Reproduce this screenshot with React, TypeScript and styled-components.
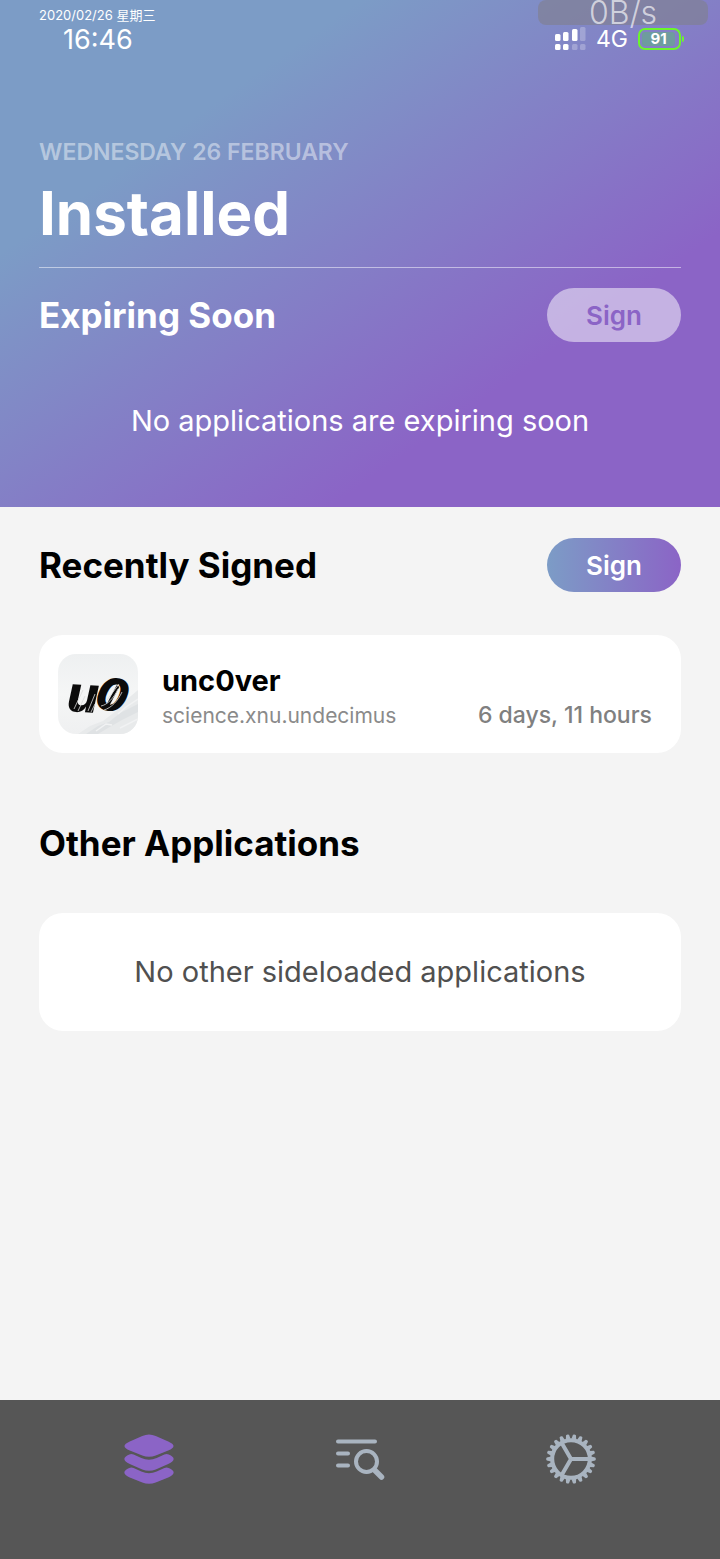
import React from 'react';
import styled, { createGlobalStyle } from 'styled-components';

const GlobalStyle = createGlobalStyle`
  *, *::before, *::after { box-sizing: border-box; }
  body { margin: 0; background: #f4f4f4; color: #000; font-family: Inter, "Noto Sans CJK SC", sans-serif; }
  h1, h2, h3, p { margin: 0; }
`;

const Page = styled.div`
  display: flex;
  flex-direction: column;
  min-height: 100vh;
`;

const Hero = styled.header`
  position: relative;
  padding: 6px 39px 66px;
  color: #fff;
  background: linear-gradient(to bottom right, #7c9cc6 25%, #8b64c6 73%);
`;

const StatusBar = styled.div`
  display: flex;
  justify-content: space-between;
  align-items: flex-end;
`;

const Clock = styled.div`
  display: flex;
  flex-direction: column;
`;

const DateLine = styled.span`
  font-size: 13px;
  line-height: 18px;
`;

const Time = styled.time`
  padding-left: 24px;
  font-size: 27px;
  line-height: 32px;
`;

const Indicators = styled.div`
  display: flex;
  align-items: center;
  gap: 10px;
  height: 34px;
`;

const Network = styled.span`
  font-size: 23px;
  line-height: 32px;
`;

const Battery = styled.div`
  position: relative;
  width: 43px;
  height: 22px;
  padding: 2px;
  border: 2px solid #6cf52c;
  border-radius: 7px;
  &::after {
    content: '';
    position: absolute;
    right: -5px;
    top: 6px;
    width: 2px;
    height: 6px;
    border-radius: 0 2px 2px 0;
    background: #6cf52c;
  }
`;

const Charge = styled.div`
  width: 33px;
  border-radius: 3px;
  background: #6e9c9e;
  font-size: 15px;
  font-weight: 700;
  line-height: 14px;
  text-align: center;
`;

const SpeedBadge = styled.div`
  position: absolute;
  top: 0;
  right: 12px;
  width: 170px;
  height: 25px;
  border-radius: 8px;
  background: rgba(128, 128, 148, 0.7);
  color: rgba(255, 255, 255, 0.65);
  font-size: 32px;
  font-weight: 300;
  line-height: 26px;
  text-align: center;
`;

const Today = styled.p`
  margin-top: 80px;
  color: rgba(255, 255, 255, 0.45);
  font-size: 23px;
  font-weight: 600;
  line-height: 32px;
`;

const Title = styled.h1`
  padding: 9px 0 18px;
  border-bottom: 1px solid rgba(255, 255, 255, 0.5);
  font-size: 60px;
  font-weight: 700;
  line-height: 72px;
`;

const SectionRow = styled.div`
  display: flex;
  justify-content: space-between;
  align-items: center;
  min-height: 54px;
`;

const HeroRow = styled(SectionRow)`
  margin-top: 20px;
`;

const SectionTitle = styled.h2`
  font-size: 35px;
  font-weight: 700;
  line-height: 44px;
`;

const SignButton = styled.button<{ $muted?: boolean }>`
  width: 134px;
  height: 54px;
  border: 0;
  border-radius: 27px;
  font-family: inherit;
  font-size: 26px;
  font-weight: 600;
  color: ${(p) => (p.$muted ? '#8b64c6' : '#fff')};
  background: ${(p) => (p.$muted ? 'rgba(255, 255, 255, 0.5)' : 'linear-gradient(to right, #7c9cc6, #8b64c6)')};
`;

const Message = styled.p`
  font-size: 29px;
  line-height: 40px;
  text-align: center;
`;

const HeroMessage = styled(Message)`
  margin-top: 59px;
`;

const Content = styled.main`
  flex: 1;
  padding: 31px 39px;
`;

const Card = styled.section`
  display: flex;
  align-items: center;
  min-height: 118px;
  margin: 43px 0 63px;
  padding: 19px 29px 19px 19px;
  border-radius: 24px;
  background: #fff;
`;

const EmptyCard = styled(Card)`
  justify-content: center;
  padding: 19px;
  color: #505050;
`;

const AppDetails = styled.div`
  flex: 1;
  margin-left: 24px;
  padding-top: 6px;
`;

const AppName = styled.h3`
  font-size: 29px;
  font-weight: 700;
  line-height: 38px;
`;

const BundleId = styled.p`
  color: #8a8a8a;
  font-size: 21px;
  line-height: 32px;
`;

const TimeLeft = styled.span`
  align-self: flex-end;
  color: #808080;
  font-size: 23px;
  font-weight: 500;
  line-height: 38px;
`;

const TabBar = styled.nav`
  display: flex;
  align-items: flex-start;
  height: 159px;
  padding: 34px 43px;
  background: #565656;
`;

const Tab = styled.button<{ $active?: boolean }>`
  display: flex;
  flex: 1;
  justify-content: center;
  padding: 0;
  border: 0;
  background: none;
  color: ${(p) => (p.$active ? '#8b64c6' : '#a9b4c0')};
`;

const bars = [
  { x: 0, y: 7, h: 7 },
  { x: 8, y: 5, h: 9 },
  { x: 17, y: 2, h: 12 },
  { x: 25, y: 0, h: 14 },
];

function Signal() {
  return (
    <svg width="31" height="24" viewBox="0 0 31 24" fill="#fff" role="img" aria-label="Signal strength">
      {bars.map((b, i) => (
        <g key={b.x}>
          <rect x={b.x} y={b.y} width="5.500" height={b.h} rx="1.500" opacity={i > 2 ? 0.25 : 1} />
          <rect x={b.x} y="17" width="5.500" height="6" rx="1.500" opacity={i > 1 ? 0.25 : 1} />
        </g>
      ))}
    </svg>
  );
}

function AppIcon() {
  return (
    <svg width="80" height="80" viewBox="0 0 80 80" role="img" aria-label="unc0ver icon">
      <defs>
        <clipPath id="tile"><rect width="80" height="80" rx="18" /></clipPath>
        <linearGradient id="sky" x1="0" y1="0" x2="0" y2="1">
          <stop offset="0" stopColor="#eef0f1" />
          <stop offset="0.5" stopColor="#f5f6f6" />
          <stop offset="1" stopColor="#eff0f1" />
        </linearGradient>
      </defs>
      <g clipPath="url(#tile)">
        <rect width="80" height="80" fill="url(#sky)" />
        <path d="M20 80 32 72 45 67 58 57 67 47 80 36V80Z" fill="#e8eaeb" />
        <path d="M28 80 40 72 51 68 62 59 80 50V58L64 66 50 74 40 80Z" fill="#dfe2e4" />
        <path d="M60 60 68 53 80 45M38 77 48 70 54 71M62 74 80 65" stroke="#f1f2f3" strokeWidth="1.500" fill="none" />
      </g>
      <g fontFamily="Inter" fontWeight="800" fontStyle="italic" fill="#0b0b0b">
        <text x="9" y="58" fontSize="50" transform="rotate(3 25 45)">u</text>
        <text x="38" y="57" fontSize="46" transform="rotate(14 54 42)">0</text>
      </g>
      <path d="M50 51 60 32" stroke="#0b0b0b" strokeWidth="3" fill="none" />
      <path d="M16 55 25 36M20 57 27 42M30 57 37 40M33 58 37 50M43 52C49 51 56 44 60 35M46 56C53 54 60 47 64 38M49 46 61 30" stroke="#dcdcdc" strokeWidth="0.800" fill="none" />
    </svg>
  );
}

function LayersIcon() {
  return (
    <svg width="50" height="50" viewBox="0 0 52 50" preserveAspectRatio="none" fill="currentColor" aria-hidden="true">
      <path d="M19 2Q26-1 33 2L46 7.500Q57 12 46 16.500L33 21.500Q26 24 19 21.500L6 16.500Q-5 12 6 7.500Z" />
      <path d="M5.500 20.500Q7.500 19.500 10 20.500L18 24Q26 27.500 34 24L42 20.500Q44.500 19.500 46.500 20.500Q57 25 46 30L33 35.500Q26 38 19 35.500L6 30Q-5 25 5.500 20.500Z" />
      <path d="M5.500 34Q7.500 33 10 34L18 37.500Q26 41 34 37.500L42 34Q44.500 33 46.500 34Q57 38.500 46 43.500L33 48.500Q26 51 19 48.500L6 43.500Q-5 38.500 5.500 34Z" />
    </svg>
  );
}

function SearchListIcon() {
  return (
    <svg width="50" height="50" viewBox="0 0 50 50" fill="none" stroke="currentColor" strokeWidth="4" strokeLinecap="round" aria-hidden="true">
      <path d="M3 7.500H40M3 19.500H13M3 31.500H13" />
      <circle cx="31.500" cy="27.500" r="10.500" />
      <path d="M39.500 36 46.500 43" strokeWidth="5.500" />
    </svg>
  );
}

const teeth = Array.from({ length: 22 }, (_, i) => (i * 360) / 22);

function GearIcon() {
  return (
    <svg width="50" height="50" viewBox="-25 -25 50 50" fill="none" stroke="currentColor" aria-hidden="true">
      <circle r="18.800" strokeWidth="4" />
      {teeth.map((a) => (
        <path key={a} d="M20-2.400 24.200-1.500Q25.500 0 24.200 1.500L20 2.400Z" fill="currentColor" stroke="none" transform={`rotate(${a})`} />
      ))}
      <path d="M0 0H18M0 0-9-15.600M0 0-9 15.600" strokeWidth="4" />
    </svg>
  );
}

export default function App() {
  return (
    <Page>
      <GlobalStyle />
      <Hero>
        <StatusBar>
          <Clock>
            <DateLine>2020/02/26 星期三</DateLine>
            <Time>16:46</Time>
          </Clock>
          <Indicators>
            <Signal />
            <Network>4G</Network>
            <Battery><Charge>91</Charge></Battery>
          </Indicators>
        </StatusBar>
        <SpeedBadge>0B/s</SpeedBadge>
        <Today>WEDNESDAY 26 FEBRUARY</Today>
        <Title>Installed</Title>
        <HeroRow>
          <SectionTitle>Expiring Soon</SectionTitle>
          <SignButton type="button" $muted>Sign</SignButton>
        </HeroRow>
        <HeroMessage>No applications are expiring soon</HeroMessage>
      </Hero>
      <Content>
        <SectionRow>
          <SectionTitle>Recently Signed</SectionTitle>
          <SignButton type="button">Sign</SignButton>
        </SectionRow>
        <Card>
          <AppIcon />
          <AppDetails>
            <AppName>unc0ver</AppName>
            <BundleId>science.xnu.undecimus</BundleId>
          </AppDetails>
          <TimeLeft>6 days, 11 hours</TimeLeft>
        </Card>
        <SectionRow>
          <SectionTitle>Other Applications</SectionTitle>
        </SectionRow>
        <EmptyCard>
          <Message>No other sideloaded applications</Message>
        </EmptyCard>
      </Content>
      <TabBar aria-label="Main">
        <Tab type="button" aria-label="Installed" $active><LayersIcon /></Tab>
        <Tab type="button" aria-label="Browse"><SearchListIcon /></Tab>
        <Tab type="button" aria-label="Settings"><GearIcon /></Tab>
      </TabBar>
    </Page>
  );
}
